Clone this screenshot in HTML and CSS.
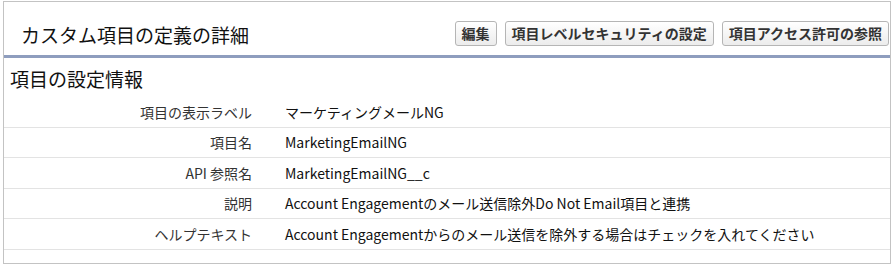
FILE: index.html
```html
<!DOCTYPE html>
<html lang="ja">
<head>
<meta charset="utf-8">
<title>カスタム項目の定義の詳細</title>
<link rel="stylesheet" href="styles.css">
</head>
<body>
<div class="block">
  <div class="block-header">
    <h2 class="title">カスタム項目の定義の詳細</h2>
    <div class="buttons">
      <button class="btn">編集</button>
      <button class="btn">項目レベルセキュリティの設定</button>
      <button class="btn">項目アクセス許可の参照</button>
    </div>
  </div>
  <div class="section">
    <h3 class="section-title">項目の設定情報</h3>
    <div class="rows">
      <div class="row"><div class="label">項目の表示ラベル</div><div class="value">マーケティングメールNG</div></div>
      <div class="row"><div class="label">項目名</div><div class="value">MarketingEmailNG</div></div>
      <div class="row"><div class="label">API 参照名</div><div class="value">MarketingEmailNG__c</div></div>
      <div class="row"><div class="label">説明</div><div class="value">Account Engagementのメール送信除外Do Not Email項目と連携</div></div>
      <div class="row"><div class="label">ヘルプテキスト</div><div class="value">Account Engagementからのメール送信を除外する場合はチェックを入れてください</div></div>
    </div>
  </div>
</div>
</body>
</html>
```

FILE: styles.css
```css
html, body {
  margin: 0;
  padding: 0;
  background: #fff;
}
body {
  font-family: "Noto Sans CJK JP", "Noto Sans", sans-serif;
  color: #000;
}
.block {
  margin: 1px 3px 0 3px;
  border: 1px solid #c3c3c3;
  height: 263px;
  box-sizing: border-box;
  background: #fff;
}
.block-header {
  display: flex;
  justify-content: space-between;
  align-items: center;
  height: 53px;
  padding: 0 1px 0 17px;
  border-bottom: 3px solid #8e9dbe;
}
.title {
  margin: 12px 0 0 0;
  font-size: 19px;
  font-weight: normal;
  line-height: 24px;
  color: #111;
}
.buttons {
  display: flex;
  gap: 8px;
  margin-top: 9px;
}
.btn {
  margin: 0;
  font-family: "Noto Sans CJK JP", sans-serif;
  font-size: 14px;
  font-weight: bold;
  color: #333;
  height: 25px;
  padding: 0 6px;
  line-height: 21px;
  border: 1px solid #b5b5b5;
  border-radius: 3px;
  background: linear-gradient(#ffffff, #ececec);
}
.section-title {
  margin: 0;
  padding: 9px 0 0 6px;
  height: 30px;
  font-size: 19px;
  font-weight: normal;
  line-height: 24px;
  color: #111;
}
.row {
  display: grid;
  grid-template-columns: 248px 1fr;
  align-items: center;
  min-height: 29.5px;
  border-bottom: 1px solid #e3e3e3;
  font-size: 14px;
  line-height: 18px;
}
.label {
  text-align: right;
  color: #333;
}
.value {
  padding-left: 33px;
  color: #111;
}
```
